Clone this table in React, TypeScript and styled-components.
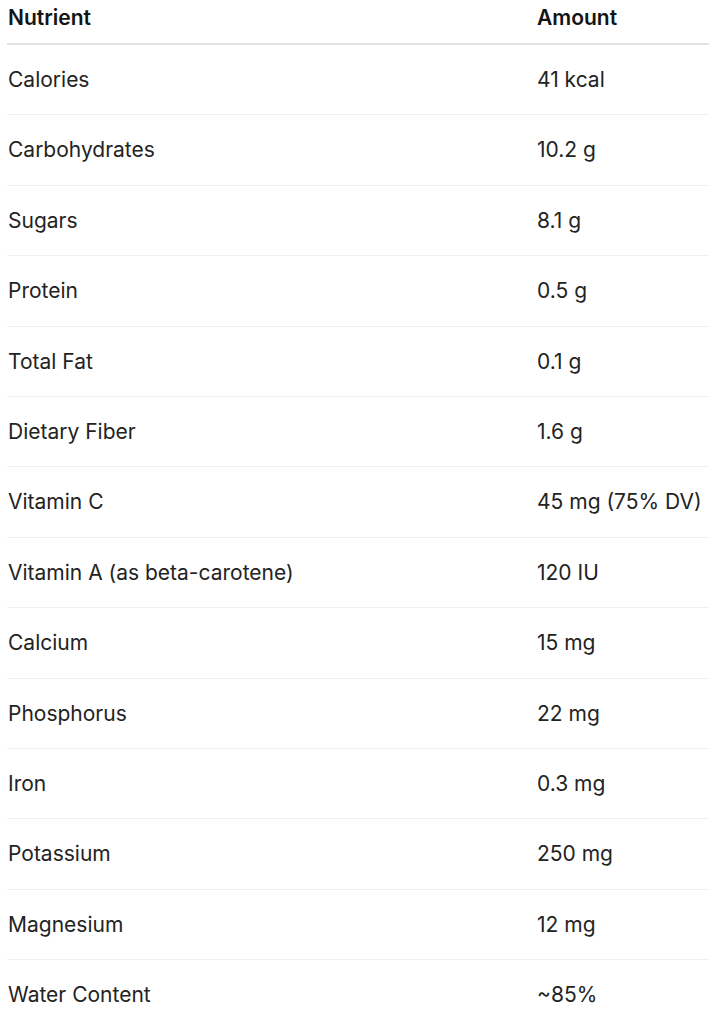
import React from 'react';
import styled, { createGlobalStyle } from 'styled-components';

interface NutrientRow {
  name: string;
  amount: string;
}

const nutrients: NutrientRow[] = [
  { name: 'Calories', amount: '41 kcal' },
  { name: 'Carbohydrates', amount: '10.2 g' },
  { name: 'Sugars', amount: '8.1 g' },
  { name: 'Protein', amount: '0.5 g' },
  { name: 'Total Fat', amount: '0.1 g' },
  { name: 'Dietary Fiber', amount: '1.6 g' },
  { name: 'Vitamin C', amount: '45 mg (75% DV)' },
  { name: 'Vitamin A (as beta-carotene)', amount: '120 IU' },
  { name: 'Calcium', amount: '15 mg' },
  { name: 'Phosphorus', amount: '22 mg' },
  { name: 'Iron', amount: '0.3 mg' },
  { name: 'Potassium', amount: '250 mg' },
  { name: 'Magnesium', amount: '12 mg' },
  { name: 'Water Content', amount: '~85%' },
];

const GlobalStyle = createGlobalStyle`
  body {
    margin: 0;
    background: #ffffff;
    font-family: Inter, Roboto, "Liberation Sans", sans-serif;
  }
`;

const Table = styled.table`
  margin-left: 7px;
  width: 702px;
  border-collapse: collapse;
  color: #232323;
  font-size: 21px;
`;

const HeadCell = styled.th<{ $first?: boolean }>`
  text-align: left;
  font-weight: 600;
  color: #141414;
  line-height: 28px;
  padding: 4px 0 11px 1px;
  border-bottom: 2px solid #e2e2e2;
  width: ${(p) => (p.$first ? '528px' : 'auto')};
`;

const Row = styled.tr`
  border-bottom: 1px solid #efefef;
`;

const Cell = styled.td`
  padding: 20px 0 20px 1px;
  line-height: 29.4px;
  font-weight: 400;
`;

export default function App() {
  return (
    <>
      <GlobalStyle />
      <Table>
        <thead>
          <tr>
            <HeadCell $first>Nutrient</HeadCell>
            <HeadCell>Amount</HeadCell>
          </tr>
        </thead>
        <tbody>
          {nutrients.map((n) => (
            <Row key={n.name}>
              <Cell>{n.name}</Cell>
              <Cell>{n.amount}</Cell>
            </Row>
          ))}
        </tbody>
      </Table>
    </>
  );
}
